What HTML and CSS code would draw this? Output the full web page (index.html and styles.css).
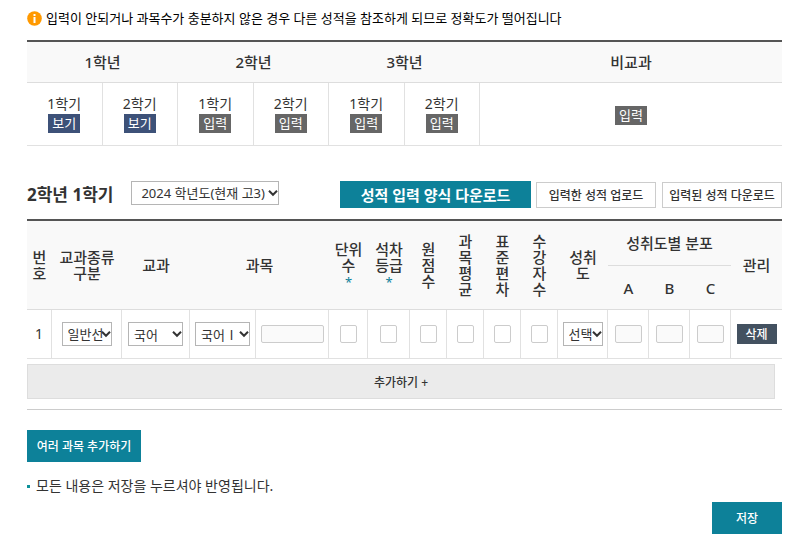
FILE: index.html
```html
<!DOCTYPE html>
<html lang="ko">
<head>
<meta charset="utf-8">
<title>성적 입력</title>
<link rel="stylesheet" href="styles.css">
</head>
<body>
<main class="page">
  <p class="notice">
    <svg class="notice-icon" viewBox="0 0 15 15" aria-hidden="true">
      <circle cx="7.5" cy="7.5" r="7.3" fill="#ff9900"/>
      <rect x="6.5" y="3" width="2" height="2" fill="#fff"/>
      <rect x="6.5" y="6" width="2" height="6" fill="#fff"/>
    </svg>
    <span>입력이 안되거나 과목수가 충분하지 않은 경우 다른 성적을 참조하게 되므로 정확도가 떨어집니다</span>
  </p>

  <table class="grid terms">
    <thead>
      <tr><th colspan="2">1학년</th><th colspan="2">2학년</th><th colspan="2">3학년</th><th class="extra">비교과</th></tr>
    </thead>
    <tbody>
      <tr>
        <td>1학기<button type="button" class="tag tag-view">보기</button></td>
        <td>2학기<button type="button" class="tag tag-view">보기</button></td>
        <td>1학기<button type="button" class="tag">입력</button></td>
        <td>2학기<button type="button" class="tag">입력</button></td>
        <td>1학기<button type="button" class="tag">입력</button></td>
        <td>2학기<button type="button" class="tag">입력</button></td>
        <td><button type="button" class="tag">입력</button></td>
      </tr>
    </tbody>
  </table>

  <div class="toolbar">
    <h2>2학년 1학기</h2>
    <select class="year" aria-label="학년도"><option>2024 학년도(현재 고3)</option></select>
    <div class="actions">
      <button type="button" class="download">성적 입력 양식 다운로드</button>
      <button type="button" class="outline">입력한 성적 업로드</button>
      <button type="button" class="outline">입력된 성적 다운로드</button>
    </div>
  </div>

  <table class="grid subjects">
    <colgroup>
      <col class="c-no"><col class="c-kind"><col class="c-group"><col class="c-name"><col class="c-custom">
      <col class="c-unit"><col class="c-rank"><col class="c-narrow"><col class="c-narrow"><col class="c-narrow"><col class="c-narrow">
      <col class="c-level"><col class="c-dist"><col class="c-dist"><col class="c-dist"><col class="c-manage">
    </colgroup>
    <thead>
      <tr>
        <th rowspan="2">번<br>호</th>
        <th rowspan="2">교과종류<br>구분</th>
        <th rowspan="2">교과</th>
        <th rowspan="2" colspan="2">과목</th>
        <th rowspan="2">단위<br>수<br><span class="required">*</span></th>
        <th rowspan="2">석차<br>등급<br><span class="required">*</span></th>
        <th rowspan="2">원<br>점<br>수</th>
        <th rowspan="2">과<br>목<br>평<br>균</th>
        <th rowspan="2">표<br>준<br>편<br>차</th>
        <th rowspan="2">수<br>강<br>자<br>수</th>
        <th rowspan="2">성취<br>도</th>
        <th colspan="3">성취도별 분포</th>
        <th rowspan="2">관리</th>
      </tr>
      <tr><th>A</th><th>B</th><th>C</th></tr>
    </thead>
    <tbody>
      <tr>
        <td class="number">1</td>
        <td><select class="kind" aria-label="교과종류 구분"><option>일반선택</option></select></td>
        <td><select class="subject" aria-label="교과"><option>국어</option></select></td>
        <td><select class="subject" aria-label="과목"><option>국어Ⅰ</option></select></td>
        <td><input class="field-wide" type="text" aria-label="과목 직접 입력" disabled></td>
        <td><input type="text" aria-label="단위수"></td>
        <td><input type="text" aria-label="석차등급"></td>
        <td><input type="text" aria-label="원점수"></td>
        <td><input type="text" aria-label="과목평균"></td>
        <td><input type="text" aria-label="표준편차"></td>
        <td><input type="text" aria-label="수강자수"></td>
        <td><select class="level" aria-label="성취도"><option>선택</option></select></td>
        <td><input class="field-dist" type="text" aria-label="A 비율" disabled></td>
        <td><input class="field-dist" type="text" aria-label="B 비율" disabled></td>
        <td><input class="field-dist" type="text" aria-label="C 비율" disabled></td>
        <td><button type="button" class="delete">삭제</button></td>
      </tr>
    </tbody>
  </table>

  <div class="add-area">
    <button type="button" class="add">추가하기 +</button>
  </div>

  <button type="button" class="primary bulk">여러 과목 추가하기</button>
  <p class="hint">모든 내용은 저장을 누르셔야 반영됩니다.</p>
  <div class="footer"><button type="button" class="primary save">저장</button></div>
</main>
</body>
</html>
```
FILE: styles.css
```css
* { box-sizing: border-box; }

body {
  margin: 0;
  background: #fff;
  color: #333;
  font: 14px/16px "Noto Sans", "Noto Sans CJK KR", sans-serif;
}

button, select, input { margin: 0; font-family: inherit; color: inherit; }
button { padding: 0; border: 0; cursor: pointer; }

.page { padding: 8px 15px 4px 27px; }

.notice {
  display: flex;
  align-items: center;
  gap: 4px;
  height: 20px;
  margin: 0 0 12px;
  color: #000;
  font-size: 13px;
}
.notice-icon { width: 15px; height: 15px; }

.grid {
  width: 100%;
  table-layout: fixed;
  border-collapse: separate;
  border-spacing: 0;
  border-top: 2px solid #555;
  text-align: center;
}
.grid th {
  padding: 0;
  background: #f9f9f9;
  border-bottom: 1px solid #ddd;
  font-size: 15px;
  font-weight: 500;
}
.grid td {
  padding: 0;
  border-right: 1px solid #e1e1e1;
  border-bottom: 1px solid #e1e1e1;
}
.grid td:last-child { border-right: 0; }

.terms th { height: 41px; }
.terms .extra { width: 40%; }
.terms td { height: 63px; font-size: 14px; }

.tag {
  display: block;
  width: 32px;
  height: 19px;
  margin: 5px auto 0;
  background: #666;
  color: #fff;
  font-size: 13px;
  line-height: 19px;
}
.tag:only-child { margin-top: 2px; }
.tag-view { background: #3d5178; }

.toolbar {
  display: flex;
  align-items: center;
  height: 27px;
  margin: 35px 0 11px;
}
.toolbar h2 { margin: 0 18px 0 0; font-size: 17px; line-height: 24px; }
.toolbar select { margin-bottom: 4px; }
.actions { display: flex; align-items: flex-end; gap: 6px; margin-left: auto; }

select {
  height: 24px;
  padding: 0 8px 0 5px;
  appearance: none;
  background: #fff url("data:image/svg+xml,%3Csvg xmlns='http://www.w3.org/2000/svg' width='10' height='8'%3E%3Cpath d='M1 1.8 5 5.8 9 1.8' fill='none' stroke='%23333' stroke-width='2'/%3E%3C/svg%3E") right 0 center no-repeat;
  border: 1px solid #b5b5b5;
  border-radius: 0;
  font-size: 13px;
}
.year { width: 148px; padding-left: 9px; }

.download {
  width: 191px;
  height: 27px;
  margin-right: -1px;
  background: #0d8199;
  color: #fff;
  font-size: 15px;
  font-weight: 700;
}
.outline {
  width: 120px;
  height: 26px;
  background: #fff;
  border: 1px solid #ccc;
  font-size: 12px;
  font-weight: 500;
}

.subjects th { height: 45px; }
.subjects tr + tr th { height: 44px; }
.subjects td { height: 49px; }
.c-no { width: 25px; }
.c-kind { width: 70px; }
.c-group { width: 68px; }
.c-name { width: 66px; }
.c-custom { width: 73px; }
.c-unit { width: 39px; }
.c-rank { width: 42px; }
.c-narrow { width: 37px; }
.c-level { width: 50px; }
.c-dist { width: 41px; }
.c-manage { width: 51px; }
.required { color: #0d8199; font-size: 13px; font-weight: 400; }

.subjects select, .subjects input, .delete { display: block; margin: 0 auto; }
.kind { width: 50px; }
.subject { width: 55px; font-family: "Noto Sans CJK KR", sans-serif; }
.level { width: 40px; }

input {
  width: 17px;
  height: 18px;
  padding: 0;
  background: #fff;
  border: 1px solid #ccc;
  border-radius: 2px;
}
input:disabled { background: #fafafa; }
.field-wide { width: 63px; }
.field-dist { width: 27px; }

.delete {
  width: 40px;
  height: 20px;
  background: #435160;
  color: #fff;
  font-size: 12px;
  font-weight: 500;
}

.add-area {
  margin-bottom: 20px;
  padding: 5px 7px 10px 0;
  border-bottom: 1px solid #ccc;
}
.add {
  display: block;
  width: 100%;
  height: 35px;
  background: #ebebeb;
  border: 1px solid #ddd;
  font-size: 12px;
  font-weight: 500;
}

.primary { display: block; height: 32px; background: #0d8199; color: #fff; font-size: 12px; font-weight: 500; }
.bulk { width: 114px; }
.save { width: 70px; }

.hint { display: flex; align-items: center; gap: 6px; margin: 16px 0 0; }
.hint::before { width: 3px; height: 3px; background: #0d9199; content: ""; }
.footer { display: flex; justify-content: flex-end; margin-top: 8px; }
```
